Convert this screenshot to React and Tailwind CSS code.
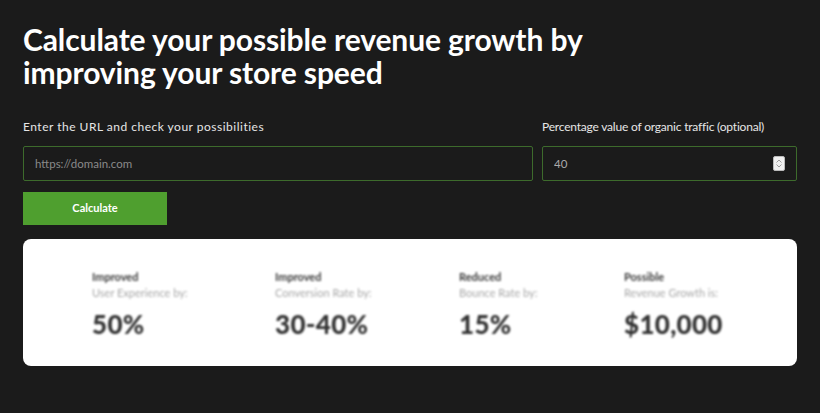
import { useState } from "react";

const stats = [
  { tag: "Improved", label: "User Experience by:", value: "50%", w: "w-[183px]" },
  { tag: "Improved", label: "Conversion Rate by:", value: "30-40%", w: "w-[184px]" },
  { tag: "Reduced", label: "Bounce Rate by:", value: "15%", w: "w-[165px]" },
  { tag: "Possible", label: "Revenue Growth is:", value: "$10,000", w: "w-[150px]" },
];

function Spinner() {
  return (
    <div className="w-[12px] h-[15px] bg-[#f2f2f2] border border-[#bbb] rounded-[2px] flex flex-col items-center justify-center leading-none">
      <svg width="6" height="4" viewBox="0 0 6 4"><path d="M0.5 3.5 L3 1 L5.5 3.5" fill="none" stroke="#888" strokeWidth="0.8" /></svg>
      <svg width="6" height="4" viewBox="0 0 6 4" className="mt-[1px]"><path d="M0.5 0.5 L3 3 L5.5 0.5" fill="none" stroke="#888" strokeWidth="0.8" /></svg>
    </div>
  );
}

export default function App() {
  const [url, setUrl] = useState("");
  const [traffic, setTraffic] = useState("40");

  return (
    <div className="w-[820px] h-[413px] bg-[#1b1b1b] px-[23px] pt-[23px] font-['Lato',sans-serif] overflow-hidden">
      <h1 className="text-white text-[30px] font-bold leading-[33px] tracking-[-0.1px]">
        Calculate your possible revenue growth by<br />improving your store speed
      </h1>

      <div className="flex gap-[9px] mt-[30px]">
        <div className="w-[510px]">
          <div className="text-[#e6e6e6] text-[12px] leading-[16px] tracking-[0.5px]">Enter the URL and check your possibilities</div>
          <input
            value={url}
            onChange={e => setUrl(e.target.value)}
            placeholder="https://domain.com"
            className="mt-[11px] w-full h-[35px] bg-[#1b1b1b] border border-[#3d6b2c] rounded-[2px] px-[11px] text-[11.5px] text-[#ccc] placeholder:text-[#8a8a8a] outline-none"
          />
        </div>
        <div className="w-[255px]">
          <div className="text-[#e6e6e6] text-[12px] leading-[16px] tracking-[-0.2px]">Percentage value of organic traffic (optional)</div>
          <div className="mt-[11px] h-[35px] border border-[#3d6b2c] rounded-[2px] flex items-center pl-[11px] pr-[11px]">
            <input
              value={traffic}
              onChange={e => setTraffic(e.target.value)}
              className="flex-1 bg-transparent text-[11.5px] text-[#aaa] outline-none"
            />
            <Spinner />
          </div>
        </div>
      </div>

      <button className="mt-[11px] w-[144px] h-[33px] bg-[#4f9f2f] text-white text-[11px] font-bold">Calculate</button>

      <div className="mt-[14px] w-[774px] h-[127px] bg-white rounded-[8px] pl-[69px] pt-[31px] flex">
        {stats.map((s, i) => (
          <div key={i} className={`${s.w} blur-[1.1px]`}>
            <div className="text-[#3a3a3a] text-[11px] font-bold leading-[14px]">{s.tag}</div>
            <div className="text-[#a8a8a8] text-[11px] leading-[14px] mt-[2px]">{s.label}</div>
            <div className="text-[#333] text-[26px] font-black leading-[30px] mt-[9px] tracking-[0.3px]">{s.value}</div>
          </div>
        ))}
      </div>
    </div>
  );
}
